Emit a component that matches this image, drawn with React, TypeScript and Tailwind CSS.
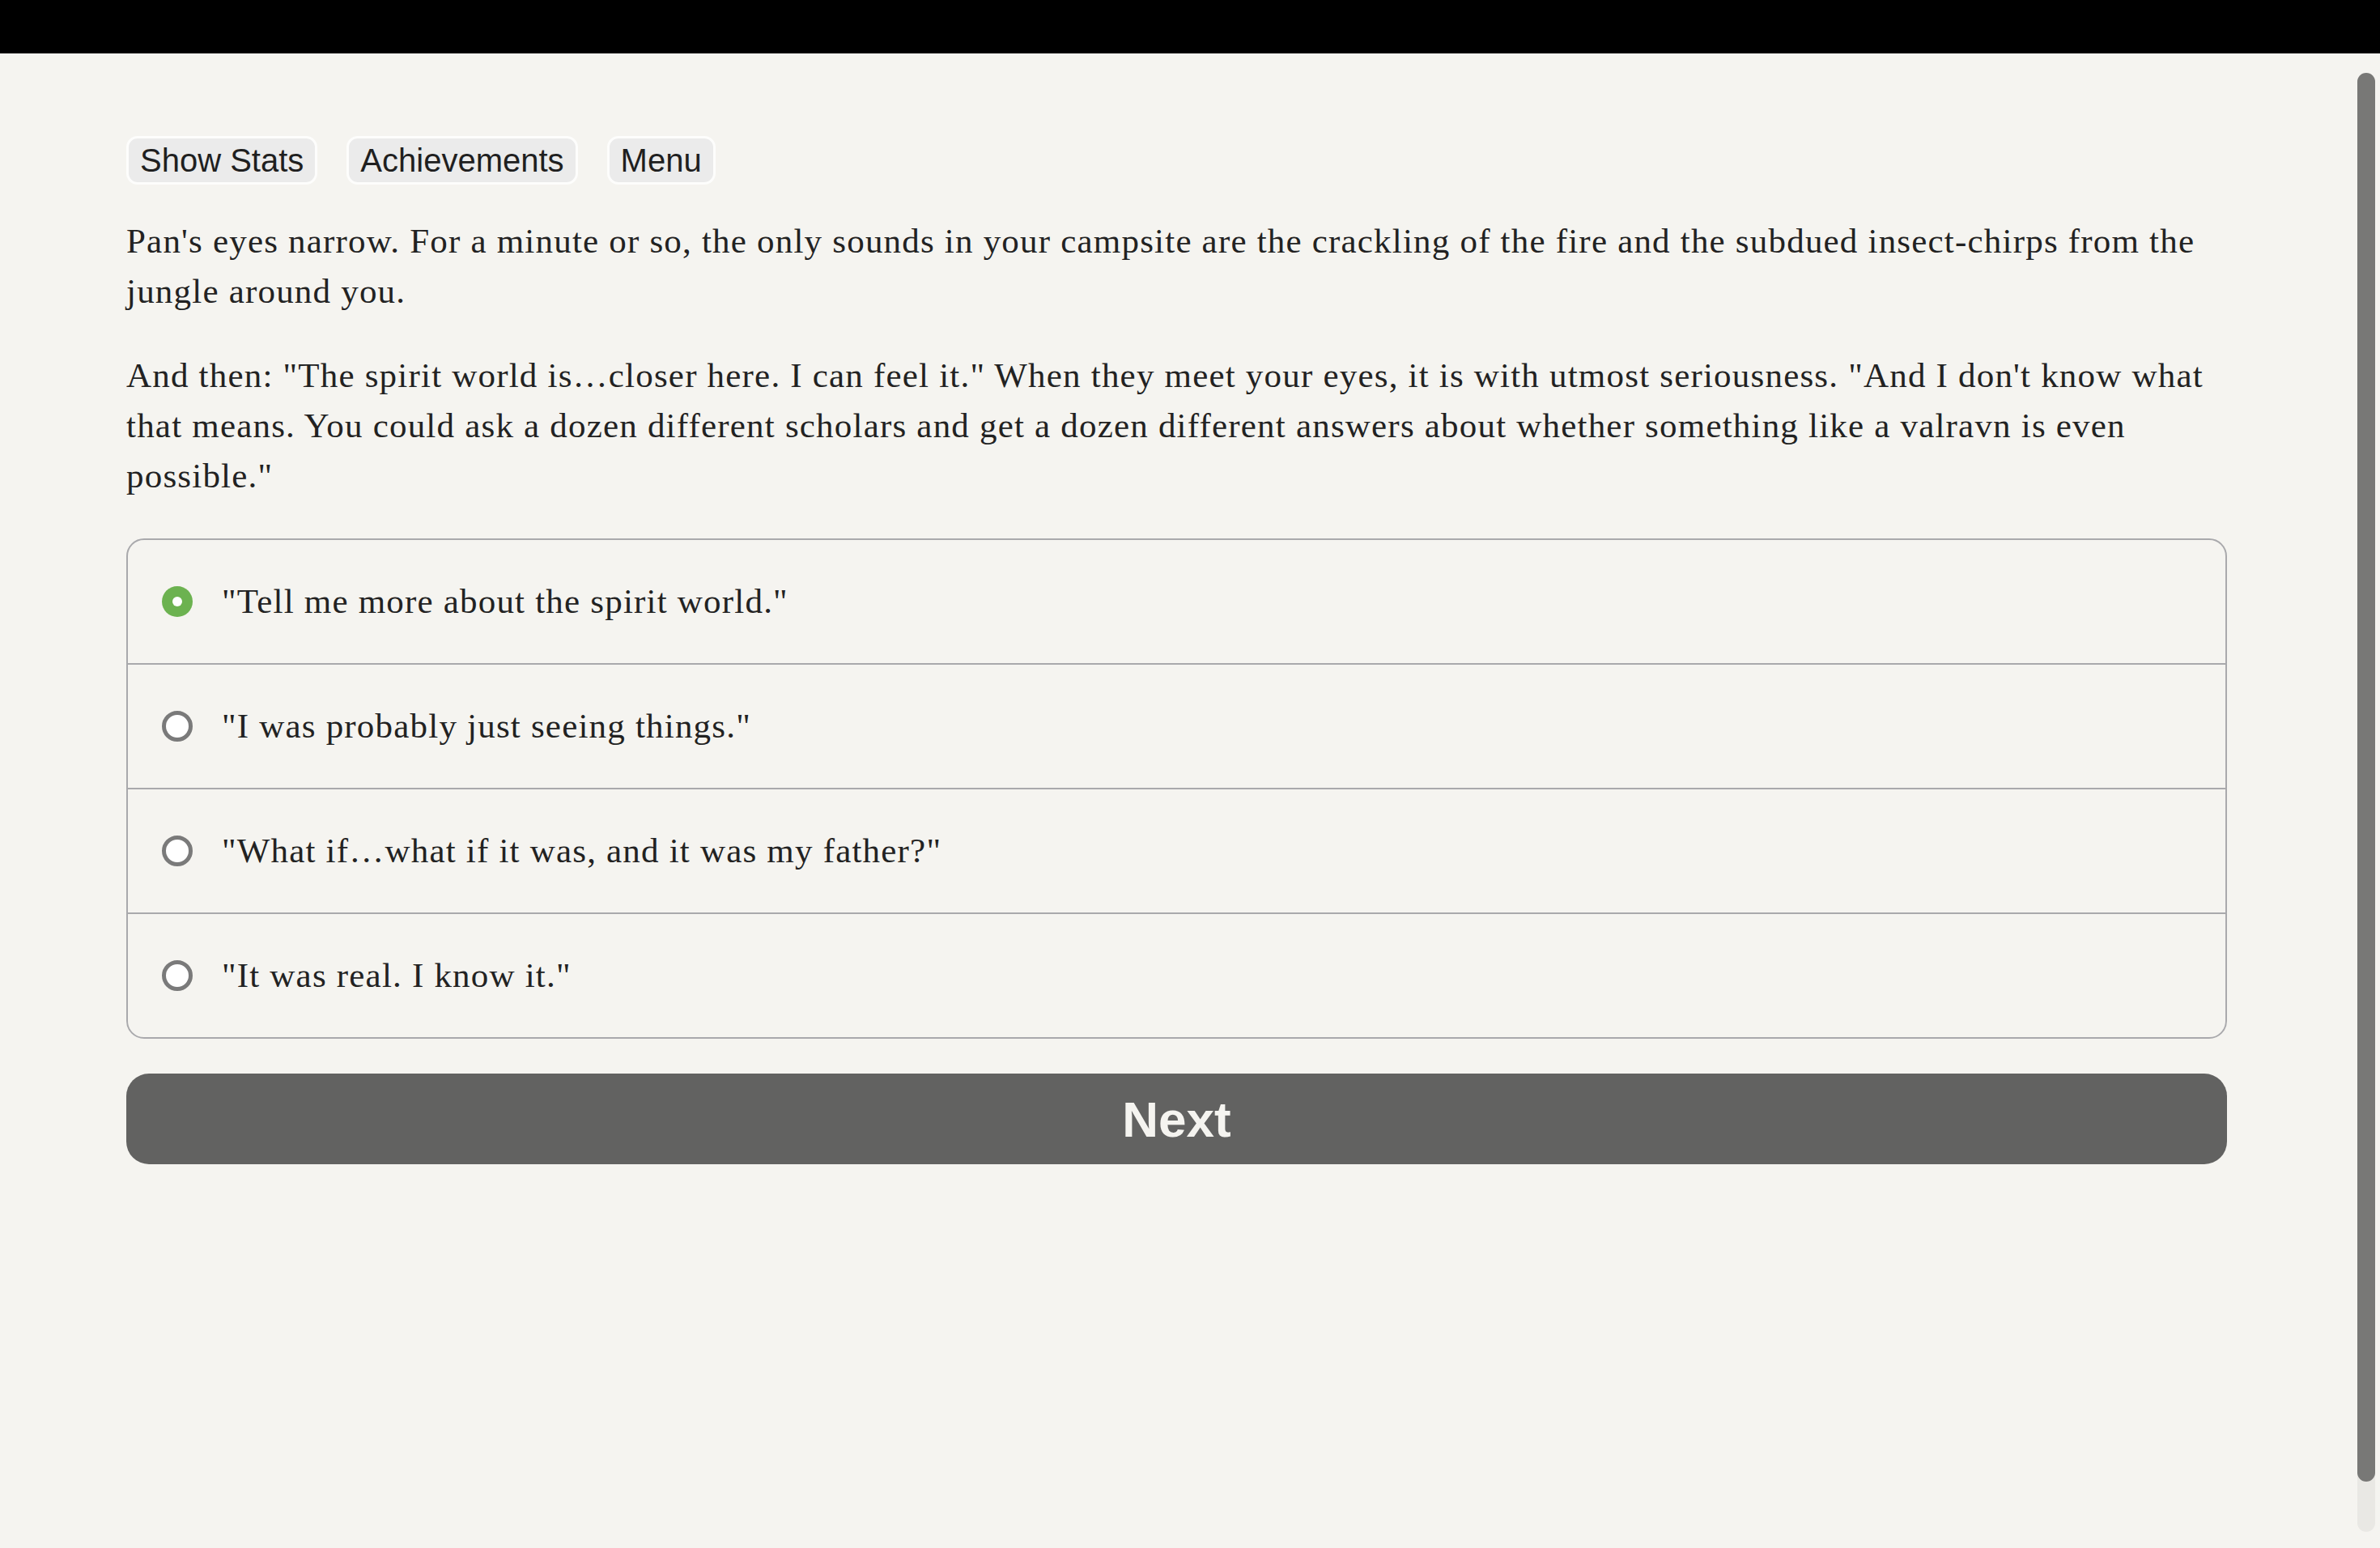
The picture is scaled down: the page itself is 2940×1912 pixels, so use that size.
const choices = [
  '"Tell me more about the spirit world."',
  '"I was probably just seeing things."',
  '"What if\u2026what if it was, and it was my father?"',
  '"It was real. I know it."',
];

export default function App() {
  const selected = 0;

  return (
    <div className="h-[1912px] overflow-hidden bg-[#f5f4f0] flex flex-col">
      {/* top bar */}
      <div className="h-[66px] bg-black shrink-0"></div>

      <div className="flex flex-1">
        <div className="flex-1 pl-[156px] pr-[161px] pt-[102px]">
          {/* header buttons */}
          <div className="flex gap-[36px] font-['Liberation_Sans',Arial,sans-serif] text-[40px] leading-[46px] text-[#1f1f1f]">
            <button className="px-[14px] py-[4px] border-[3px] border-[#fdfdfc] bg-[#ebebeb] rounded-[14px]">Show Stats</button>
            <button className="px-[14px] py-[4px] border-[3px] border-[#fdfdfc] bg-[#ebebeb] rounded-[14px]">Achievements</button>
            <button className="px-[14px] py-[4px] border-[3px] border-[#fdfdfc] bg-[#ebebeb] rounded-[14px]">Menu</button>
          </div>

          {/* story text */}
          <div className="font-['Liberation_Serif',serif] text-[43px] tracking-[1.2px] leading-[62px] text-[#222222]">
            <p className="mt-[39px]">
              Pan's eyes narrow. For a minute or so, the only sounds in your campsite are the crackling of the fire and the subdued insect-chirps from the jungle around you.
            </p>
            <p className="mt-[42px]">
              And then: "The spirit world is&hellip;closer here. I can feel it." When they meet your eyes, it is with utmost seriousness. "And I don't know what that means. You could ask a dozen different scholars and get a dozen different answers about whether something like a valravn is even possible."
            </p>

            {/* choices */}
            <div className="mt-[46px] border-2 border-[#a9a9ac] rounded-[22px] overflow-hidden">
              {choices.map((c, i) => (
                <div
                  key={i}
                  className={`flex items-center pl-[42px] py-[45px] ${i > 0 ? 'border-t-2 border-[#a9a9ac]' : ''}`}
                >
                  {i === selected ? (
                    <span className="w-[38px] h-[38px] rounded-full bg-[#6cb250] flex items-center justify-center shrink-0">
                      <span className="w-[12px] h-[12px] rounded-full bg-white"></span>
                    </span>
                  ) : (
                    <span className="w-[38px] h-[38px] rounded-full border-[5px] border-[#7a7a7a] bg-white shrink-0"></span>
                  )}
                  <span className="ml-[36px]">{c}</span>
                </div>
              ))}
            </div>
          </div>

          <button className="mt-[43px] w-full h-[112px] rounded-[28px] bg-[#626261] text-[#f5f4f0] font-['Liberation_Sans',Arial,sans-serif] font-bold text-[62px]">
            Next
          </button>
        </div>

        {/* scrollbar */}
        <div className="w-[22px] mr-[6px] mt-[24px]">
          <div className="h-[1802px] rounded-full bg-[#e9e8e4]">
            <div className="h-[1740px] rounded-full bg-[#787876]"></div>
          </div>
        </div>
      </div>
    </div>
  );
}
